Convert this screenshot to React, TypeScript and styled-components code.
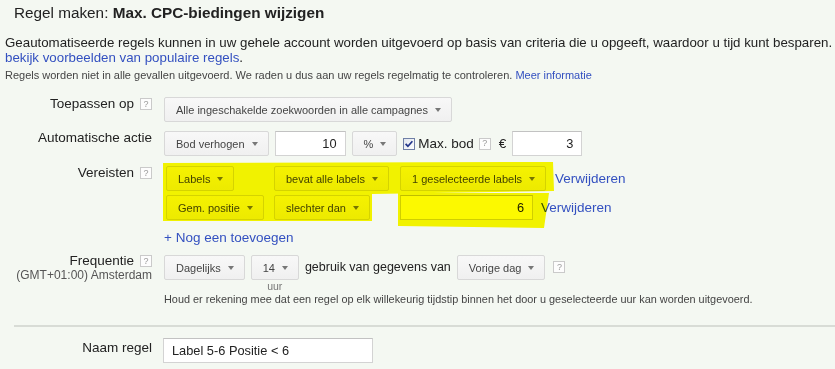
import React from 'react';
import styled, { createGlobalStyle } from 'styled-components';

const Bg = '#f4f8f2';
const LinkBlue = '#3350c0';

const GlobalStyle = createGlobalStyle`
  body {
    margin: 0;
    background: ${Bg};
  }
`;

const Page = styled.div`
  width: 835px;
  height: 369px;
  overflow: hidden;
  background: ${Bg};
  font-family: 'Liberation Sans', Arial, sans-serif;
  color: #222;
`;

const Title = styled.h2`
  margin: 0;
  padding-left: 14px;
  font-size: 15.3px;
  line-height: 26px;
  font-weight: normal;

  b {
    font-weight: bold;
  }
`;

const Intro = styled.p`
  margin: 9px 0 0 5px;
  font-size: 13.3px;
  line-height: 15px;
  white-space: nowrap;
`;

const Note = styled.p`
  margin: 3px 0 0 5px;
  font-size: 11px;
  line-height: 14px;
  color: #444;
  white-space: nowrap;
`;

const Link = styled.a`
  color: ${LinkBlue};
  text-decoration: none;
  cursor: pointer;
`;

const Form = styled.div`
  display: flex;
  flex-direction: column;
  margin-top: 15px;
`;

const Row = styled.div<{ $mt?: number }>`
  display: grid;
  grid-template-columns: 152px 1fr;
  column-gap: 12px;
  margin-top: ${(p) => p.$mt ?? 0}px;
`;

const LabelCell = styled.div<{ $pt?: number }>`
  display: flex;
  flex-direction: column;
  align-items: flex-end;
  padding-top: ${(p) => p.$pt ?? 0}px;
`;

const LabelLine = styled.div`
  display: flex;
  align-items: flex-start;
  gap: 6px;
  font-size: 13.5px;
  line-height: 12px;
  white-space: nowrap;
`;

const SubLabel = styled.div`
  font-size: 12px;
  line-height: 12px;
  color: #555;
  margin-top: 2px;
  white-space: nowrap;
`;

const Help = styled.span`
  display: inline-flex;
  align-items: center;
  justify-content: center;
  box-sizing: border-box;
  width: 12px;
  height: 12px;
  border: 1px solid #cacaca;
  background: #fdfdfd;
  color: #9a9a9a;
  font-size: 9px;
  line-height: 1;
`;

const Controls = styled.div<{ $gap?: number }>`
  display: flex;
  align-items: center;
  gap: ${(p) => p.$gap ?? 6}px;
`;

const Column = styled.div`
  display: flex;
  flex-direction: column;
  align-items: flex-start;
`;

const DropButton = styled.button`
  display: inline-flex;
  align-items: center;
  box-sizing: border-box;
  height: 25px;
  padding: 0 10px 0 11px;
  border: 1px solid #d8d8d8;
  border-radius: 2px;
  background: linear-gradient(#f8f8f8, #f0f0f0);
  color: #444;
  font-family: 'Liberation Sans', Arial, sans-serif;
  font-size: 11px;
  white-space: nowrap;
  cursor: pointer;
`;

const Caret = styled.span`
  display: inline-block;
  width: 0;
  height: 0;
  margin-left: 7px;
  border-left: 3.5px solid transparent;
  border-right: 3.5px solid transparent;
  border-top: 4px solid #777;
`;

const Field = styled.input<{ $w: number; $align?: 'left' | 'right' }>`
  box-sizing: border-box;
  width: ${(p) => p.$w}px;
  height: 25px;
  padding: 0 8px;
  border: 1px solid #d3d3d3;
  border-top-color: #c2c2c2;
  background: #fff;
  color: #222;
  font-family: 'Liberation Sans', Arial, sans-serif;
  font-size: 12.8px;
  text-align: ${(p) => p.$align ?? 'right'};
  outline: none;
`;

const Text = styled.span<{ $size?: number }>`
  font-size: ${(p) => p.$size ?? 13.5}px;
  line-height: 25px;
  white-space: nowrap;
`;

const TextLink = styled(Link)`
  font-size: 13.5px;
  white-space: nowrap;
`;

const Conditions = styled.div`
  position: relative;
  margin-left: 2px;
  display: grid;
  grid-template-columns: 108px 126px auto;
  row-gap: 4px;
  align-items: center;
  justify-items: start;
`;

const Marker = styled.svg`
  position: absolute;
  left: 0;
  top: 0;
  overflow: visible;
  mix-blend-mode: multiply;
  pointer-events: none;
`;

const AddLink = styled(Link)`
  display: block;
  margin-top: 10px;
  font-size: 13.5px;
  line-height: 16px;
`;

const Caption = styled.div`
  align-self: center;
  font-size: 10.5px;
  line-height: 12px;
  color: #777;
`;

const Hint = styled.div`
  margin-top: 1px;
  font-size: 10.9px;
  line-height: 12px;
  color: #444;
  white-space: nowrap;
`;

const Divider = styled.hr`
  margin: 20px 0 0 14px;
  border: none;
  height: 2px;
  background: #d8dcd6;
`;

const CheckBox = () => (
  <svg width="12" height="12" viewBox="0 0 12 12">
    <defs>
      <linearGradient id="cbg" x1="0" y1="0" x2="1" y2="1">
        <stop offset="0" stopColor="#dfe5ee" />
        <stop offset="1" stopColor="#ffffff" />
      </linearGradient>
    </defs>
    <rect x="0.5" y="0.5" width="11" height="11" fill="url(#cbg)" stroke="#6f7fa6" />
    <path d="M2.6 5.8 L4.9 8.2 L9.4 3.2" fill="none" stroke="#22358a" strokeWidth="1.7" />
  </svg>
);

const Select = ({ children }: { children: React.ReactNode }) => (
  <DropButton type="button">
    {children}
    <Caret />
  </DropButton>
);

const App = () => {
  return (
    <Page>
      <GlobalStyle />
      <Title>
        Regel maken: <b>Max. CPC-biedingen wijzigen</b>
      </Title>
      <Intro>
        Geautomatiseerde regels kunnen in uw gehele account worden uitgevoerd op basis van criteria die u opgeeft, waardoor u tijd kunt besparen.
        <br />
        <Link>bekijk voorbeelden van populaire regels</Link>.
      </Intro>
      <Note>
        Regels worden niet in alle gevallen uitgevoerd. We raden u dus aan uw regels regelmatig te controleren. <Link>Meer informatie</Link>
      </Note>

      <Form>
        <Row>
          <LabelCell $pt={1}>
            <LabelLine>
              Toepassen op <Help>?</Help>
            </LabelLine>
          </LabelCell>
          <Controls>
            <Select>Alle ingeschakelde zoekwoorden in alle campagnes</Select>
          </Controls>
        </Row>

        <Row $mt={9}>
          <LabelCell $pt={1}>
            <LabelLine>Automatische actie</LabelLine>
          </LabelCell>
          <Controls>
            <Select>Bod verhogen</Select>
            <Field $w={71} value="10" readOnly />
            <Select>%</Select>
            <Controls $gap={3}>
              <CheckBox />
              <Text>Max. bod</Text>
              <Help style={{ marginLeft: 2 }}>?</Help>
              <Text style={{ marginLeft: 5 }}>€</Text>
            </Controls>
            <Field $w={70} value="3" readOnly />
          </Controls>
        </Row>

        <Row $mt={10}>
          <LabelCell $pt={1}>
            <LabelLine>
              Vereisten <Help>?</Help>
            </LabelLine>
          </LabelCell>
          <div>
            <Conditions>
              <Select>Labels</Select>
              <Select>bevat alle labels</Select>
              <Controls $gap={9}>
                <Select>1 geselecteerde labels</Select>
                <TextLink>Verwijderen</TextLink>
              </Controls>
              <Select>Gem. positie</Select>
              <Select>slechter dan</Select>
              <Controls $gap={8}>
                <Field $w={133} value="6" readOnly />
                <TextLink>Verwijderen</TextLink>
              </Controls>
              <Marker width="390" height="64">
                <path d="M-3,-3 L387,-4 L388,25 L206,28 L206,55 L-3,55 Z" fill="#fcf900" />
                <path d="M232,27 L383,27 L378,62 L232,60 Z" fill="#fcf900" />
              </Marker>
            </Conditions>
            <AddLink>+ Nog een toevoegen</AddLink>
          </div>
        </Row>

        <Row $mt={9}>
          <LabelCell>
            <LabelLine>
              Frequentie <Help>?</Help>
            </LabelLine>
            <SubLabel>(GMT+01:00) Amsterdam</SubLabel>
          </LabelCell>
          <div>
            <Controls style={{ alignItems: 'flex-start' }}>
              <Select>Dagelijks</Select>
              <Column>
                <Select>14</Select>
                <Caption>uur</Caption>
              </Column>
              <Text $size={12.5}>gebruik van gegevens van</Text>
              <Select>Vorige dag</Select>
              <Help style={{ marginLeft: 2, marginTop: 6 }}>?</Help>
            </Controls>
            <Hint>
              Houd er rekening mee dat een regel op elk willekeurig tijdstip binnen het door u geselecteerde uur kan worden uitgevoerd.
            </Hint>
          </div>
        </Row>

        <Divider />

        <Row $mt={11}>
          <LabelCell $pt={4}>
            <LabelLine>Naam regel</LabelLine>
          </LabelCell>
          <Controls style={{ marginLeft: -1 }}>
            <Field $w={210} $align="left" value="Label 5-6 Positie < 6" readOnly />
          </Controls>
        </Row>
      </Form>
    </Page>
  );
};

export default App;
